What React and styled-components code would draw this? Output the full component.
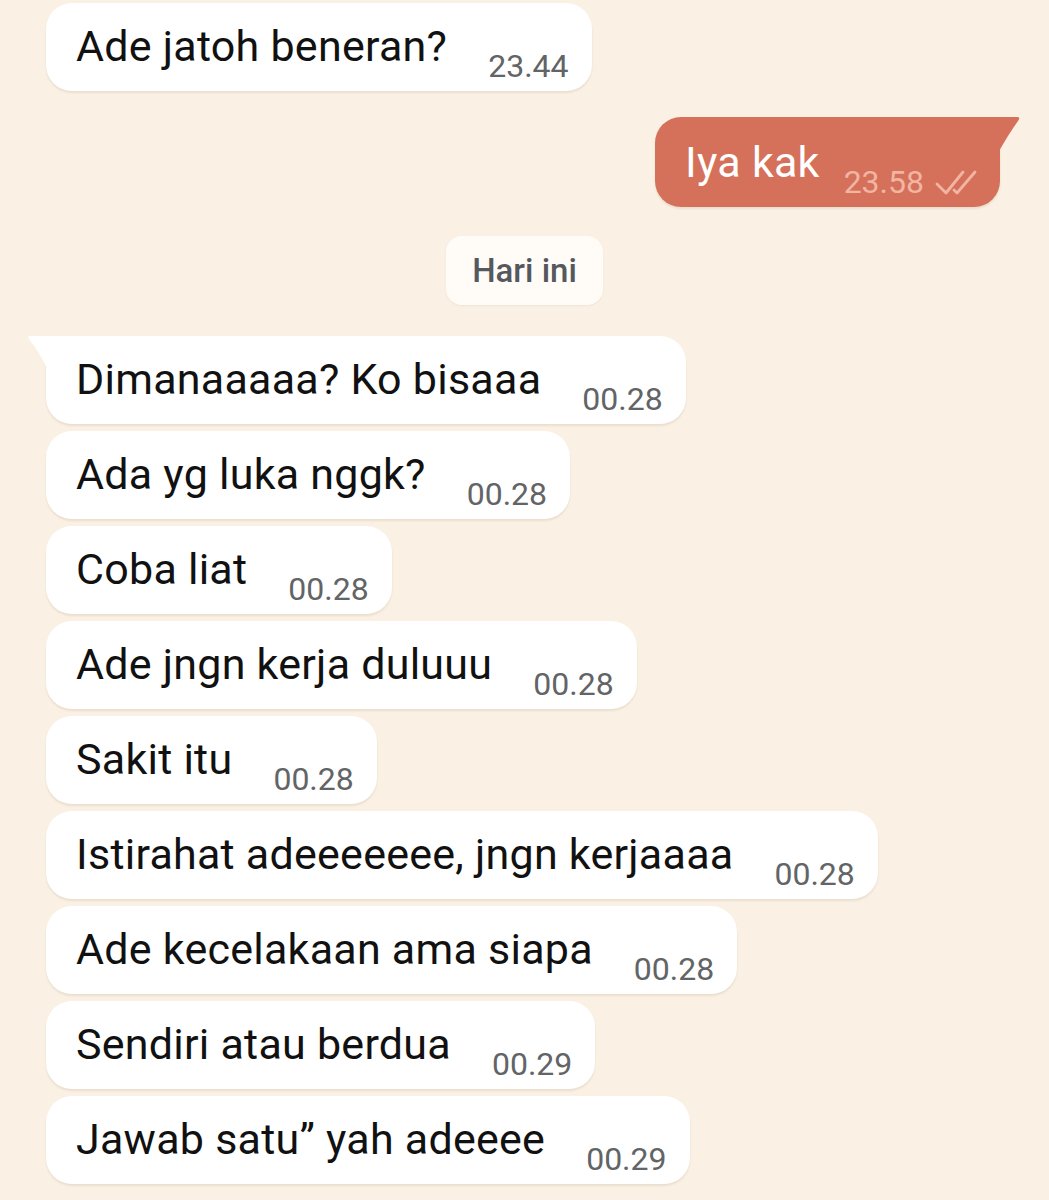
import React from "react";
import styled, { createGlobalStyle } from "styled-components";

const Global = createGlobalStyle`
  html, body { margin: 0; padding: 0; background: #faf1e4; }
  body { font-family: Roboto, "Noto Sans", "Liberation Sans", sans-serif; }
`;

const Chat = styled.div`
  width: 1049px;
  height: 1200px;
  overflow: hidden;
  box-sizing: border-box;
  padding: 3px 29px 0 46px;
  display: flex;
  flex-direction: column;
  background: #faf1e4;
`;

const Row = styled.div`
  display: flex;
  justify-content: ${(p) => (p.$out ? "flex-end" : "flex-start")};
  margin-top: ${(p) => p.$gap ?? 7}px;
`;

const Bubble = styled.div`
  position: relative;
  display: flex;
  align-items: flex-end;
  box-sizing: border-box;
  height: ${(p) => (p.$out ? 90 : 88)}px;
  padding: 0 23px 7px 30px;
  border-radius: 26px;
  border-top-left-radius: ${(p) => (p.$tailLeft ? 0 : 26)}px;
  border-top-right-radius: ${(p) => (p.$out ? 0 : 26)}px;
  margin-right: ${(p) => (p.$out ? 20 : 0)}px;
  background: ${(p) => (p.$out ? "#d5715a" : "#ffffff")};
  box-shadow: 0 2px 2px rgba(120, 90, 60, 0.12);
`;

const Text = styled.span`
  font-size: 43px;
  line-height: 50px;
  letter-spacing: 0.25px;
  color: ${(p) => (p.$out ? "#ffffff" : "#111111")};
  margin-bottom: 13px;
  white-space: nowrap;
`;

const Meta = styled.span`
  display: flex;
  align-items: center;
  gap: 11px;
  margin-left: ${(p) => (p.$out ? 24 : 41)}px;
  font-size: 32px;
  line-height: 36px;
  color: ${(p) => (p.$out ? "#f2b4a3" : "#626466")};
  white-space: nowrap;
`;

const TailSvg = styled.svg`
  position: absolute;
  top: 0;
  ${(p) => (p.$side === "left" ? "left: -18px;" : "right: -20px;")}
`;

const ChipRow = styled.div`
  display: flex;
  justify-content: center;
  margin-top: 29px;
  padding-right: 17px;
`;

const Chip = styled.div`
  box-sizing: border-box;
  height: 69px;
  padding: 0 26px;
  display: flex;
  align-items: center;
  background: #fffcf8;
  border-radius: 16px;
  font-size: 33px;
  font-weight: 500;
  color: #55595d;
  box-shadow: 0 1px 2px rgba(120, 90, 60, 0.08);
`;

const Ticks = () => (
  <svg width="42" height="25" viewBox="0 0 42 25" fill="none" stroke="#f2b4a3" strokeWidth="2.8" strokeLinecap="round" strokeLinejoin="round">
    <path d="M2 14 L11 23 L28 2" />
    <path d="M19 20 L22 23 L40 2" />
  </svg>
);

const Msg = ({ text, time, out, tail, gap }) => (
  <Row $out={out} $gap={gap}>
    <Bubble $out={out} $tailLeft={tail && !out}>
      {tail && !out && (
        <TailSvg $side="left" width="20" height="30" viewBox="0 0 20 30">
          <path d="M20 0 L2 0 Q-1 0 1 3 Q10 14 18 30 L20 30 Z" fill="#ffffff" />
        </TailSvg>
      )}
      {out && (
        <TailSvg $side="right" width="22" height="36" viewBox="0 0 22 36">
          <path d="M0 0 L19 0 Q23 0 20 4 Q10 18 0 36 Z" fill="#d5715a" />
        </TailSvg>
      )}
      <Text $out={out}>{text}</Text>
      <Meta $out={out}>
        {time}
        {out && <Ticks />}
      </Meta>
    </Bubble>
  </Row>
);

export default function App() {
  return (
    <>
      <Global />
      <Chat>
        <Msg text="Ade jatoh beneran?" time="23.44" gap={0} />
        <Msg text="Iya kak" time="23.58" out gap={26} />
        <ChipRow>
          <Chip>Hari ini</Chip>
        </ChipRow>
        <Msg text="Dimanaaaaa? Ko bisaaa" time="00.28" tail gap={31} />
        <Msg text="Ada yg luka nggk?" time="00.28" />
        <Msg text="Coba liat" time="00.28" />
        <Msg text="Ade jngn kerja duluuu" time="00.28" />
        <Msg text="Sakit itu" time="00.28" />
        <Msg text="Istirahat adeeeeeee, jngn kerjaaaa" time="00.28" />
        <Msg text="Ade kecelakaan ama siapa" time="00.28" />
        <Msg text="Sendiri atau berdua" time="00.29" />
        <Msg text="Jawab satu” yah adeeee" time="00.29" />
      </Chat>
    </>
  );
}
